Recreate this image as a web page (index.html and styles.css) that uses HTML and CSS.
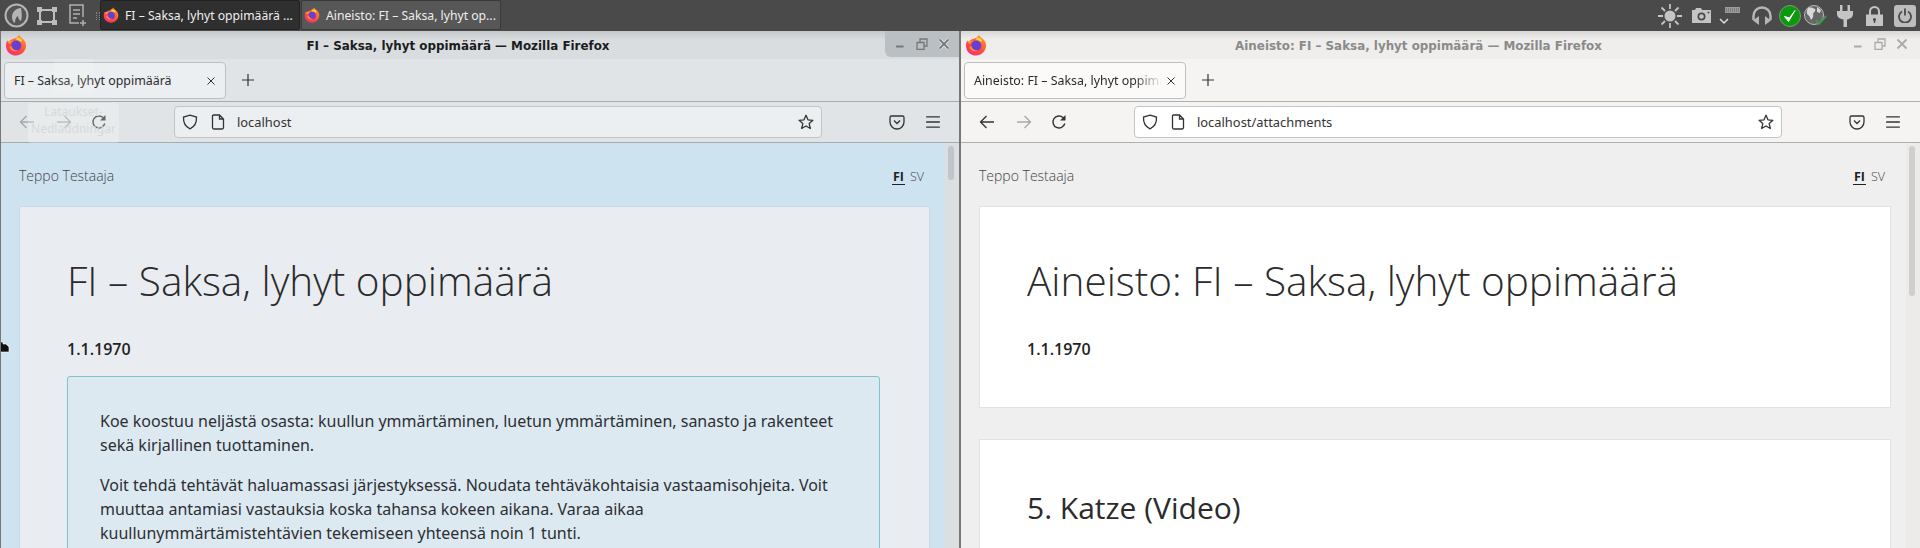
FILE: index.html
```html
<!DOCTYPE html>
<html lang="fi">
<head>
  <meta charset="UTF-8" />
  <title>Koe</title>
  <link rel="stylesheet" href="styles.css">
</head>
<body>
  <svg class="defs" width="0" height="0">
    <defs>
      <linearGradient id="fxBody" x1="0.8" y1="0" x2="0.2" y2="1">
        <stop offset="0" stop-color="#ff9a2e"/>
        <stop offset="0.55" stop-color="#ff4f3c"/>
        <stop offset="1" stop-color="#f0307a"/>
      </linearGradient>
      <symbol id="fx" viewBox="0 0 22 22">
        <path d="M14 0.8c0.6 2.4 4.6 3.6 6.3 7.2 1.6 3.5 0.6 7.800-2.200 10.600-3.900 3.800-10.400 3.900-14.300 0.100C0.600 15.600 0.200 10.200 2.200 6.400l1.800 1.900c0.400-1.300 1.200-2.200 2.400-2.700 2.500-0.900 6-1.600 7.600-4.800z" fill="url(#fxBody)"/>
        <path d="M11.500 3.500c2.400-0.200 4.700 1 5.800 3l-1.800 1.500c-1-1.300-2.600-2-4.200-1.800z" fill="#ffd23c"/>
        <circle cx="11.300" cy="11.600" r="5" fill="#6a3fd0"/>
        <path d="M6.300 11.500c0.400 3.200 3.400 5.300 6.400 4.800-2.800 2-7.200 0.600-8.300-2.800z" fill="#ff8a2a"/>
        <path d="M2.500 7.500c1.400-0.800 4-1.200 5.400-0.400-1.500 0.300-2.400 1.500-2.600 3-1 0-2.200-1.200-2.800-2.600z" fill="#ff9a2e"/>
      </symbol>
      <symbol id="back" viewBox="0 0 16 16"><path d="M15 8H1.500M7.500 2 1.500 8l6 6" fill="none" stroke="currentColor" stroke-width="1.300"/></symbol>
      <symbol id="forward" viewBox="0 0 16 16"><path d="M1 8h13.500M8.500 2l6 6-6 6" fill="none" stroke="currentColor" stroke-width="1.300"/></symbol>
      <symbol id="reload" viewBox="0 0 16 16"><path d="M13.800 9.500A6 6 0 1 1 12 3.500l1.800 2" fill="none" stroke="currentColor" stroke-width="1.400"/><path d="M14.500 1v5.500H9z" fill="currentColor"/></symbol>
      <symbol id="shield" viewBox="0 0 16 16"><path d="M8 1.200 14.500 3c0.300 5.500-1.800 9.600-6.500 11.800C3.300 12.600 1.200 8.500 1.500 3z" fill="none" stroke="currentColor" stroke-width="1.300"/></symbol>
      <symbol id="page" viewBox="0 0 14 16"><path d="M2.500 1h6L12.500 5v8.500a1.500 1.500 0 0 1-1.500 1.500H3A1.500 1.500 0 0 1 1.500 13.500V2A1 1 0 0 1 2.500 1zM8.500 1v4h4" fill="none" stroke="currentColor" stroke-width="1.300"/></symbol>
      <symbol id="star" viewBox="0 0 16 16"><path d="m8 1.300 2 4.500 4.900 0.500-3.700 3.300 1.100 4.900L8 12l-4.300 2.500 1.100-4.900L1.100 6.300 6 5.800z" fill="none" stroke="currentColor" stroke-width="1.300" stroke-linejoin="round"/></symbol>
      <symbol id="pocket" viewBox="0 0 16 16"><path d="M2.500 2h11A1.500 1.500 0 0 1 15 3.500V8a7 7 0 0 1-14 0V3.500A1.500 1.500 0 0 1 2.500 2z" fill="none" stroke="currentColor" stroke-width="1.300"/><path d="m5 6.500 3 3 3-3" fill="none" stroke="currentColor" stroke-width="1.300"/></symbol>
      <symbol id="menu" viewBox="0 0 14 12"><path d="M1 1.500h12M1 6h12M1 10.500h12" fill="none" stroke="currentColor" stroke-width="1.200"/></symbol>
      <symbol id="tabclose" viewBox="0 0 10 10"><path d="m1.500 1.500 7 7M8.500 1.500l-7 7" fill="none" stroke="currentColor" stroke-width="1"/></symbol>
      <symbol id="plus" viewBox="0 0 14 14"><path d="M7 1v12M1 7h12" fill="none" stroke="currentColor" stroke-width="1.200"/></symbol>
      <symbol id="wmin" viewBox="0 0 12 12"><path d="M2 7.500h7.500v2H2z" fill="currentColor"/></symbol>
      <symbol id="wmax" viewBox="0 0 12 12"><path d="M1 4.500h7v7H1zM4 4.500V1h7v7H8" fill="none" stroke="currentColor" stroke-width="1.300"/></symbol>
      <symbol id="wclose" viewBox="0 0 12 12"><path d="m1.500 1.500 9 9M10.500 1.500l-9 9" fill="none" stroke="#eee" stroke-width="3.200"/><path d="m1.500 1.500 9 9M10.500 1.500l-9 9" fill="none" stroke="currentColor" stroke-width="1.800"/></symbol>
    </defs>
  </svg>

  <header class="panel">
    <div class="launchers">
      <svg class="launch-logo" width="25" height="25" viewBox="0 0 25 25"><circle cx="12.500" cy="12.500" r="11" fill="#555" stroke="#b5b5b5" stroke-width="2"/><path d="M17 5c-5 0-9 4-9 9 0 3 1 5 3 6 0-4 1-6 3-7 0 2 1 4 3 5 1-3 1-8 0-13z" fill="#b5b5b5"/></svg>
      <svg class="launch-win" width="20" height="18" viewBox="0 0 20 18"><path d="M3 3h14v12H3z" fill="none" stroke="#bdbdbd" stroke-width="2"/><path d="M0 0h5v5H0zM15 0h5v5h-5zM0 13h5v5H0zM15 13h5v5h-5z" fill="#bdbdbd"/></svg>
      <svg class="launch-note" width="18" height="24" viewBox="0 0 18 24"><path d="M10 19H1V1h13v12M4 6h7M4 10h7M4 14h4M11 19h6M14 16v6" fill="none" stroke="#b0b0b0" stroke-width="1.500"/></svg>
      <span class="grip"></span>
    </div>
    <div class="task task-active">
      <svg class="task-icon"><use href="#fx"/></svg>
      <span class="task-label">FI – Saksa, lyhyt oppimäärä ...</span>
    </div>
    <div class="task">
      <svg class="task-icon"><use href="#fx"/></svg>
      <span class="task-label">Aineisto: FI – Saksa, lyhyt op...</span>
    </div>
    <div class="tray">
      <svg class="tray-sun" width="26" height="26" viewBox="0 0 26 26"><circle cx="13" cy="13" r="5.500" fill="#c4c4c4"/><path d="M13 1v5M13 20v5M1 13h5M20 13h5M4.500 4.500 8 8M18 18l3.500 3.500M21.500 4.500 18 8M8 18l-3.500 3.500" stroke="#c4c4c4" stroke-width="1.800"/></svg>
      <svg class="tray-cam" width="21" height="17" viewBox="0 0 21 17"><path d="M1 3h3l1-2h5l1 2h9v13H1z" fill="#c4c4c4"/><circle cx="10.500" cy="9.500" r="4" fill="#4a4a4a"/><circle cx="10.500" cy="9.500" r="2.300" fill="#c4c4c4"/><circle cx="17.500" cy="5.500" r="1" fill="#4a4a4a"/></svg>
      <svg class="tray-kbd" width="21" height="20" viewBox="0 0 21 20"><path d="M6 1h15v6H6z" fill="#9a9a9a"/><path d="M7 3h13M7 5h13" stroke="#555" stroke-width="0.800" stroke-dasharray="1 1"/><path d="m1 13 4 4 4-4" fill="none" stroke="#ddd" stroke-width="1.500"/></svg>
      <svg class="tray-head" width="22" height="20" viewBox="0 0 22 20"><path d="M2.500 14V10a8.500 8.500 0 0 1 17 0v4" fill="none" stroke="#b5b5b5" stroke-width="2.500"/><path d="M8 10v9L2 14.500zM14 10v9l6-4.500z" fill="#b5b5b5"/></svg>
      <svg class="tray-ok" width="22" height="22" viewBox="0 0 22 22"><circle cx="11" cy="11" r="10.500" fill="#0b9a0b" stroke="#7a9a7a"/><path d="m5.500 11.500 4 5 6.500-11-5.500 7.500z" fill="#fff" stroke="#fff"/></svg>
      <svg class="tray-globe" width="24" height="22" viewBox="0 0 24 22"><circle cx="10" cy="10" r="9.500" fill="#666" stroke="#bbb"/><path d="M4 3c3-1 5 0 7 1 1 2-1 3-2 5 1 3-1 5-2 6-1-2-1-4-3-5-2-2-1-5 0-7zM13 2l4 3-1 3-3-1z" fill="#d8d8d8"/><path d="m12 15 3 4 7-8" fill="none" stroke="#3f9a58" stroke-width="2"/></svg>
      <svg class="tray-plug" width="16" height="22" viewBox="0 0 16 22"><path d="M3 0h2.500v6H3zM10.500 0H13v6h-2.500zM0 6h16v3c0 3-2.500 5-6 5.500V22H6.500v-7.500C2.500 14 0 12 0 9z" fill="#c4c4c4"/></svg>
      <svg class="tray-lock" width="17" height="20" viewBox="0 0 17 20"><path d="M4 9V5.500a4.500 4.500 0 0 1 9 0V9" fill="none" stroke="#c4c4c4" stroke-width="2"/><path d="M0 8.500h17V20H0z" fill="#c4c4c4"/><circle cx="8.500" cy="13.500" r="1.500" fill="#4a4a4a"/><path d="M7.800 14h1.400v3H7.800z" fill="#4a4a4a"/></svg>
      <div class="tray-power"><svg width="14" height="15" viewBox="0 0 14 15"><path d="M4 3.500a6 6 0 1 0 6 0M7 0.500v7" fill="none" stroke="#4a4a4a" stroke-width="1.800"/></svg></div>
    </div>
  </header>

  <main class="desktop">
    <section class="window window-focus">
      <div class="titlebar">
        <svg class="title-logo"><use href="#fx"/></svg>
        <span class="title-text">FI – Saksa, lyhyt oppimäärä — Mozilla Firefox</span>
        <div class="wm-buttons">
          <svg class="wm-btn"><use href="#wmin"/></svg>
          <svg class="wm-btn"><use href="#wmax"/></svg>
          <svg class="wm-btn"><use href="#wclose"/></svg>
        </div>
      </div>
      <div class="tabbar">
        <div class="tab">
          <span class="tab-label">FI – Saksa, lyhyt oppimäärä</span>
          <svg class="tab-close"><use href="#tabclose"/></svg>
        </div>
        <svg class="tab-new"><use href="#plus"/></svg>
      </div>
      <div class="toolbar">
        <svg class="tb-icon tb-back tb-dim"><use href="#back"/></svg>
        <svg class="tb-icon tb-forward tb-dim"><use href="#forward"/></svg>
        <svg class="tb-icon tb-reload"><use href="#reload"/></svg>
        <div class="urlbar">
          <svg class="url-icon"><use href="#shield"/></svg>
          <svg class="url-icon url-page"><use href="#page"/></svg>
          <span class="url-text">localhost</span>
          <svg class="url-star"><use href="#star"/></svg>
        </div>
        <svg class="tb-icon tb-pocket"><use href="#pocket"/></svg>
        <svg class="tb-icon tb-menu"><use href="#menu"/></svg>
      </div>
      <div class="viewport">
        <div class="page">
          <div class="user-row">
            <span class="user-name">Teppo Testaaja</span>
            <span class="lang"><b class="lang-on">FI</b><span class="lang-off">SV</span></span>
          </div>
          <article class="card">
            <h1 class="exam-title">FI – Saksa, lyhyt oppimäärä</h1>
            <p class="exam-date">1.1.1970</p>
            <div class="notice">
              <p>Koe koostuu neljästä osasta: kuullun ymmärtäminen, luetun ymmärtäminen, sanasto ja rakenteet sekä kirjallinen tuottaminen.</p>
              <p>Voit tehdä tehtävät haluamassasi järjestyksessä. Noudata tehtäväkohtaisia vastaamisohjeita. Voit muuttaa antamiasi vastauksia koska tahansa kokeen aikana. Varaa aikaa kuullunymmärtämistehtävien tekemiseen yhteensä noin 1 tunti.</p>
            </div>
          </article>
        </div>
        <div class="scrollbar"><span class="thumb thumb-short"></span></div>
      </div>
      <div class="ghost">
        <span class="ghost-folder"></span>
        <span class="ghost-label">Lataukset-<br>Nedladdningar</span>
      </div>
      <svg class="cursor" width="10" height="14" viewBox="0 0 10 14"><path d="M0 3h3l0 2h3l3 3v5H0z" fill="#111" stroke="#fff" stroke-width="0.600"/></svg>
    </section>

    <section class="window window-blur">
      <div class="titlebar">
        <svg class="title-logo"><use href="#fx"/></svg>
        <span class="title-text">Aineisto: FI – Saksa, lyhyt oppimäärä — Mozilla Firefox</span>
        <div class="wm-buttons">
          <svg class="wm-btn"><use href="#wmin"/></svg>
          <svg class="wm-btn"><use href="#wmax"/></svg>
          <svg class="wm-btn"><use href="#wclose"/></svg>
        </div>
      </div>
      <div class="tabbar">
        <div class="tab">
          <span class="tab-label tab-fade">Aineisto: FI – Saksa, lyhyt oppimäärä</span>
          <svg class="tab-close"><use href="#tabclose"/></svg>
        </div>
        <svg class="tab-new"><use href="#plus"/></svg>
      </div>
      <div class="toolbar">
        <svg class="tb-icon tb-back"><use href="#back"/></svg>
        <svg class="tb-icon tb-forward tb-dim"><use href="#forward"/></svg>
        <svg class="tb-icon tb-reload"><use href="#reload"/></svg>
        <div class="urlbar">
          <svg class="url-icon"><use href="#shield"/></svg>
          <svg class="url-icon url-page"><use href="#page"/></svg>
          <span class="url-text">localhost/attachments</span>
          <svg class="url-star"><use href="#star"/></svg>
        </div>
        <svg class="tb-icon tb-pocket"><use href="#pocket"/></svg>
        <svg class="tb-icon tb-menu"><use href="#menu"/></svg>
      </div>
      <div class="viewport">
        <div class="page">
          <div class="user-row">
            <span class="user-name">Teppo Testaaja</span>
            <span class="lang"><b class="lang-on">FI</b><span class="lang-off">SV</span></span>
          </div>
          <article class="card card-head">
            <h1 class="exam-title">Aineisto: FI – Saksa, lyhyt oppimäärä</h1>
            <p class="exam-date">1.1.1970</p>
          </article>
          <article class="card">
            <h2 class="section-title">5. Katze (Video)</h2>
          </article>
        </div>
        <div class="scrollbar"><span class="thumb thumb-long"></span></div>
      </div>
    </section>
  </main>
</body>
</html>
```

FILE: styles.css
```css
html, body {
  margin: 0;
  height: 548px;
  overflow: hidden;
}
body {
  background: #4a4a4a;
  font-family: "Noto Sans", sans-serif;
  color: #222;
}
.defs {
  position: absolute;
}

/* top panel */
.panel {
  height: 31px;
  display: flex;
  align-items: flex-start;
  background: #4a4a4a;
}
.launchers {
  width: 100px;
  height: 31px;
  display: flex;
  align-items: center;
  flex-shrink: 0;
}
.launch-logo { margin-left: 4px; }
.launch-win { margin-left: 8px; }
.launch-note { margin-left: 12px; }
.grip {
  width: 2px;
  height: 8px;
  margin-left: 9px;
  border-left: 1px dotted #888;
  border-right: 1px dotted #888;
}
.task {
  box-sizing: border-box;
  width: 200px;
  height: 30px;
  display: flex;
  align-items: center;
  padding-left: 2px;
  margin-right: 1px;
  background: #575757;
  border: 1px solid #3a3a3a;
  border-radius: 2px;
  color: #eee;
  font-size: 12.200px;
}
.task-active {
  background: #2f2f2f;
  border-color: #222;
}
.task-label {
  white-space: nowrap;
}
.task-icon {
  width: 16px;
  height: 16px;
  margin-right: 6px;
  flex-shrink: 0;
}
.tray {
  margin-left: auto;
  height: 31px;
  display: flex;
  align-items: center;
  padding-right: 4px;
}
.tray-sun { margin-right: 8px; }
.tray-cam { margin-right: 7px; }
.tray-kbd { margin-right: 11px; }
.tray-head { margin-right: 6px; }
.tray-ok { margin-right: 3px; }
.tray-globe { margin-right: 9px; }
.tray-plug { margin-right: 13px; }
.tray-lock { margin-right: 11px; }
.tray-power {
  width: 22px;
  height: 22px;
  display: flex;
  align-items: center;
  justify-content: center;
  background: #bdbdbd;
  border-radius: 3px;
}

/* windows */
.desktop {
  display: flex;
  height: 517px;
}
.window {
  position: relative;
  box-sizing: border-box;
  width: 960px;
  display: flex;
  flex-direction: column;
  overflow: hidden;
  border-left: 1px solid #777;
}
.window-focus {
  border-right: 1px solid #777;
  --title-bg: #dadddf;
  --chrome-bg: #e0e4e6;
  --url-bg: #eceff1;
  --line: #a8abad;
  --title-color: #1c1c1c;
  --page-bg: #cee3f0;
  --card-bg: #e9edf1;
  --bar-bg: #dcdfe1;
  --thumb: #bfc5c9;
  --wm-color: #777;
}
.window-blur {
  --title-bg: #efeeec;
  --chrome-bg: #f5f4f2;
  --url-bg: #fff;
  --line: #b0afab;
  --title-color: #8a8a8a;
  --page-bg: #efefef;
  --card-bg: #fff;
  --bar-bg: #ecebea;
  --thumb: #cfcfcf;
  --wm-color: #aaa;
}
.titlebar {
  height: 28px;
  display: flex;
  align-items: center;
  flex-shrink: 0;
  position: relative;
  background: linear-gradient(#c4c8ca, var(--title-bg) 9px);
}
.window-blur .titlebar {
  background: linear-gradient(#d8d8d6, var(--title-bg) 9px);
}
.title-logo {
  width: 22px;
  height: 22px;
  margin-left: 4px;
}
.title-text {
  flex: 1;
  text-align: center;
  padding: 2px 70px 0 0;
  font-family: "DejaVu Sans", sans-serif;
  font-weight: bold;
  font-size: 11.900px;
  color: var(--title-color);
}
.wm-buttons {
  position: absolute;
  top: 0;
  right: 0;
  width: 74px;
  height: 26px;
  display: flex;
  align-items: center;
  justify-content: flex-end;
  gap: 10px;
  padding-right: 9px;
  box-sizing: border-box;
  color: var(--wm-color);
  border-bottom-left-radius: 6px;
}
.window-focus .wm-buttons {
  background: #b9bfc2;
}
.window-blur .wm-buttons {
  padding-right: 12px;
}
.wm-btn {
  width: 12px;
  height: 12px;
}
.tabbar {
  height: 43px;
  flex-shrink: 0;
  display: flex;
  align-items: flex-start;
  box-sizing: border-box;
  padding: 3px 0 0 3px;
  background: var(--chrome-bg);
  border-bottom: 1px solid var(--line);
}
.tab {
  box-sizing: border-box;
  display: flex;
  align-items: center;
  width: 222px;
  height: 37px;
  padding: 0 9px;
  background: var(--url-bg);
  border: 1px solid #bcc0c3;
  border-radius: 4px;
  font-size: 12.400px;
  color: #2b2b2b;
}
.window-blur .tab {
  background: #fbfaf9;
}
.tab-label {
  flex: 1;
  min-width: 0;
  overflow: hidden;
  white-space: nowrap;
}
.tab-fade {
  -webkit-mask-image: linear-gradient(to right, #000 85%, transparent);
  mask-image: linear-gradient(to right, #000 85%, transparent);
}
.tab-close {
  width: 10px;
  height: 10px;
  margin-left: 4px;
  color: #333;
}
.tab-new {
  width: 14px;
  height: 14px;
  margin: 11px 0 0 15px;
  color: #333;
}
.toolbar {
  height: 41px;
  flex-shrink: 0;
  box-sizing: border-box;
  display: flex;
  align-items: center;
  padding-left: 18px;
  background: var(--chrome-bg);
  border-bottom: 1px solid var(--line);
  color: #333;
}
.tb-icon {
  width: 16px;
  height: 16px;
}
.tb-dim { color: #a5a8aa; }
.tb-forward { margin-left: 21px; }
.tb-reload { margin-left: 19px; }
.urlbar {
  box-sizing: border-box;
  width: 648px;
  height: 32px;
  margin-left: 67px;
  display: flex;
  align-items: center;
  padding: 0 7px;
  background: var(--url-bg);
  border: 1px solid #c2c4c5;
  border-radius: 4px;
  font-size: 12.900px;
}
.url-icon {
  width: 16px;
  height: 16px;
}
.url-page {
  margin-left: 13px;
  width: 14px;
}
.url-text {
  margin-left: 12px;
  flex: 1;
}
.url-star {
  width: 16px;
  height: 16px;
}
.tb-pocket { margin-left: 67px; }
.tb-menu { margin-left: 20px; }

/* page */
.viewport {
  flex: 1;
  display: flex;
  background: var(--page-bg);
  min-height: 0;
}
.page {
  flex: 1;
  min-width: 0;
  padding: 0 15px 0 18px;
}
.user-row {
  height: 63px;
  display: flex;
  align-items: flex-start;
  justify-content: space-between;
}
.user-name {
  margin-top: 23px;
  font-family: "Open Sans", sans-serif;
  font-weight: 300;
  font-size: 14px;
  line-height: 19px;
  color: #444;
}
.lang {
  margin-top: 26px;
  margin-right: 6px;
  font-family: "Open Sans", sans-serif;
  font-size: 12.500px;
  line-height: 15px;
  display: flex;
  gap: 5px;
}
.lang-on {
  color: #222;
  border-bottom: 1px solid #222;
  padding: 0 1px;
}
.lang-off {
  font-weight: 300;
  color: #444;
}
.card {
  background: var(--card-bg);
  border: 1px solid #dfe3e6;
  box-sizing: border-box;
  height: 400px;
  padding: 0 47px;
  overflow: hidden;
}
.window-focus .card {
  border-color: #c9dbe6;
}
.card-head {
  height: 202px;
  margin-bottom: 31px;
}
.exam-title {
  margin: 47px 0 0;
  font-family: "Open Sans", sans-serif;
  font-weight: 300;
  font-size: 40.500px;
  line-height: 54px;
  color: #2b2b2b;
}
.exam-date {
  margin: 29px 0 0;
  font-family: "Open Sans", sans-serif;
  font-weight: 600;
  font-size: 16px;
  line-height: 24px;
  color: #222;
}
.notice {
  margin-top: 15px;
  width: 813px;
  box-sizing: border-box;
  padding: 32px 32px;
  background: #dde9f1;
  border: 1px solid #7cc5ca;
  border-radius: 3px;
  font-size: 16px;
  line-height: 24px;
  color: #2c2f33;
}
.notice p {
  margin: 0 0 16px;
}
.section-title {
  margin: 49px 0 0;
  font-family: "Open Sans", sans-serif;
  font-weight: 400;
  font-size: 30px;
  line-height: 38px;
  color: #2b2b2b;
}
.scrollbar {
  width: 14px;
  flex-shrink: 0;
  background: var(--bar-bg);
  padding: 3px 0 0 3px;
  box-sizing: border-box;
}
.thumb {
  display: block;
  width: 6px;
  border-radius: 3px;
  background: var(--thumb);
}
.thumb-short { height: 34px; }
.thumb-long { height: 150px; }

/* desktop icon showing through the translucent window */
.ghost {
  position: absolute;
  left: 27px;
  top: 28px;
  width: 91px;
  height: 84px;
  pointer-events: none;
  text-align: center;
  font-size: 12px;
  line-height: 17px;
  color: #d6dadc;
}
.ghost-folder {
  position: absolute;
  left: 26px;
  top: 0;
  width: 39px;
  height: 34px;
  background: rgba(255, 255, 255, 0.12);
}
.ghost-label {
  position: absolute;
  left: 0;
  right: 0;
  top: 44px;
  height: 40px;
  background: rgba(255, 255, 255, 0.25);
  border-radius: 3px;
}
.cursor {
  position: absolute;
  left: -1px;
  top: 308px;
}
```
